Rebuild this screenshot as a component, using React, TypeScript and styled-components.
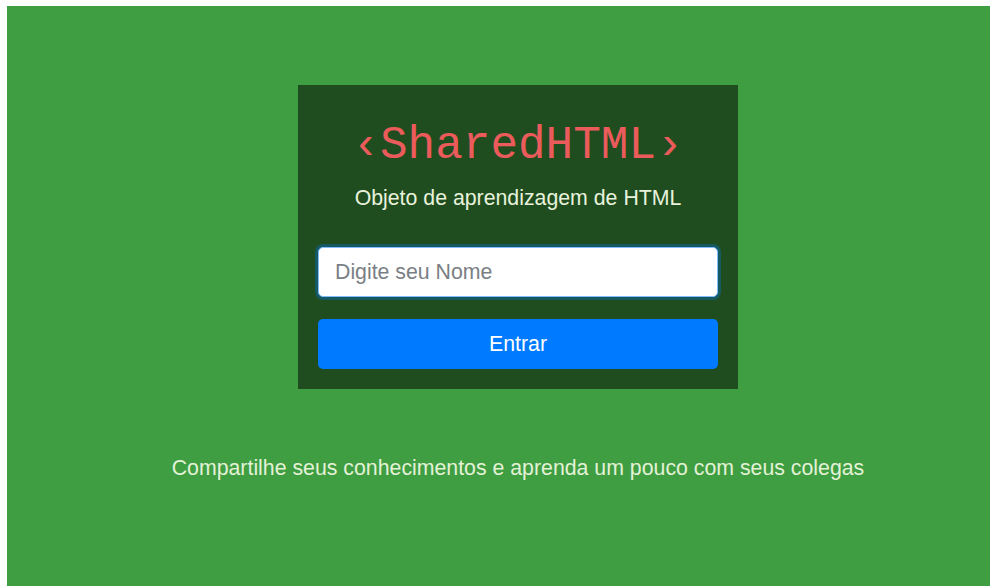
import React from "react";
import styled, { createGlobalStyle } from "styled-components";

const GlobalStyle = createGlobalStyle`
  html, body {
    margin: 0;
    padding: 0;
    background: #ffffff;
  }
  body {
    padding: 6px 0 0 7px;
    font-family: "Liberation Sans", Arial, sans-serif;
  }
`;

const App: React.FC = () => {
  const [name, setName] = React.useState("");

  return (
    <>
      <GlobalStyle />
      <Page>
        <Card>
          <Title>‹SharedHTML›</Title>
          <Subtitle>Objeto de aprendizagem de HTML</Subtitle>
          <NameInput
            placeholder="Digite seu Nome"
            value={name}
            onChange={(e) => setName(e.target.value)}
          />
          <EnterButton>Entrar</EnterButton>
        </Card>
        <Footer>
          Compartilhe seus conhecimentos e aprenda um pouco com seus colegas
        </Footer>
      </Page>
    </>
  );
};

export default App;

const Page = styled.main`
  height: 580px;
  background-color: #3f9d42;
  box-sizing: border-box;
  padding: 79px 0 0 39px;
  display: flex;
  flex-direction: column;
  align-items: center;
`;
const Card = styled.div`
  width: 440px;
  height: 304px;
  box-sizing: border-box;
  padding: 33px 20px 20px;
  background-color: #1f4d1f;
  display: flex;
  flex-direction: column;
  align-items: center;
`;
const Title = styled.h1`
  margin: 0;
  font-family: "Liberation Mono", "Courier New", monospace;
  font-weight: 400;
  font-size: 46px;
  line-height: 56px;
  color: #ec5b5b;
`;
const Subtitle = styled.p`
  margin: 11px 0 0;
  font-size: 21.3px;
  line-height: 26px;
  color: #e8f2dc;
`;
const NameInput = styled.input`
  margin-top: 36px;
  width: 100%;
  height: 50px;
  flex-shrink: 0;
  box-sizing: border-box;
  padding: 0 16px;
  font-family: "Liberation Sans", Arial, sans-serif;
  font-size: 21.3px;
  color: #495057;
  background: #ffffff;
  border: 1px solid #80bdff;
  border-radius: 5px;
  outline: none;
  box-shadow: 0 0 0 3px rgba(0, 123, 255, 0.3);
  &::placeholder {
    color: #7a7f85;
  }
`;
const EnterButton = styled.button`
  margin-top: 22px;
  width: 100%;
  height: 50px;
  flex-shrink: 0;
  border: none;
  border-radius: 5px;
  background-color: #007bff;
  color: #ffffff;
  font-family: "Liberation Sans", Arial, sans-serif;
  font-size: 21.3px;
  cursor: pointer;
`;
const Footer = styled.p`
  margin: 66px 0 0;
  font-size: 21.3px;
  line-height: 26px;
  color: #e3f2d6;
`;
